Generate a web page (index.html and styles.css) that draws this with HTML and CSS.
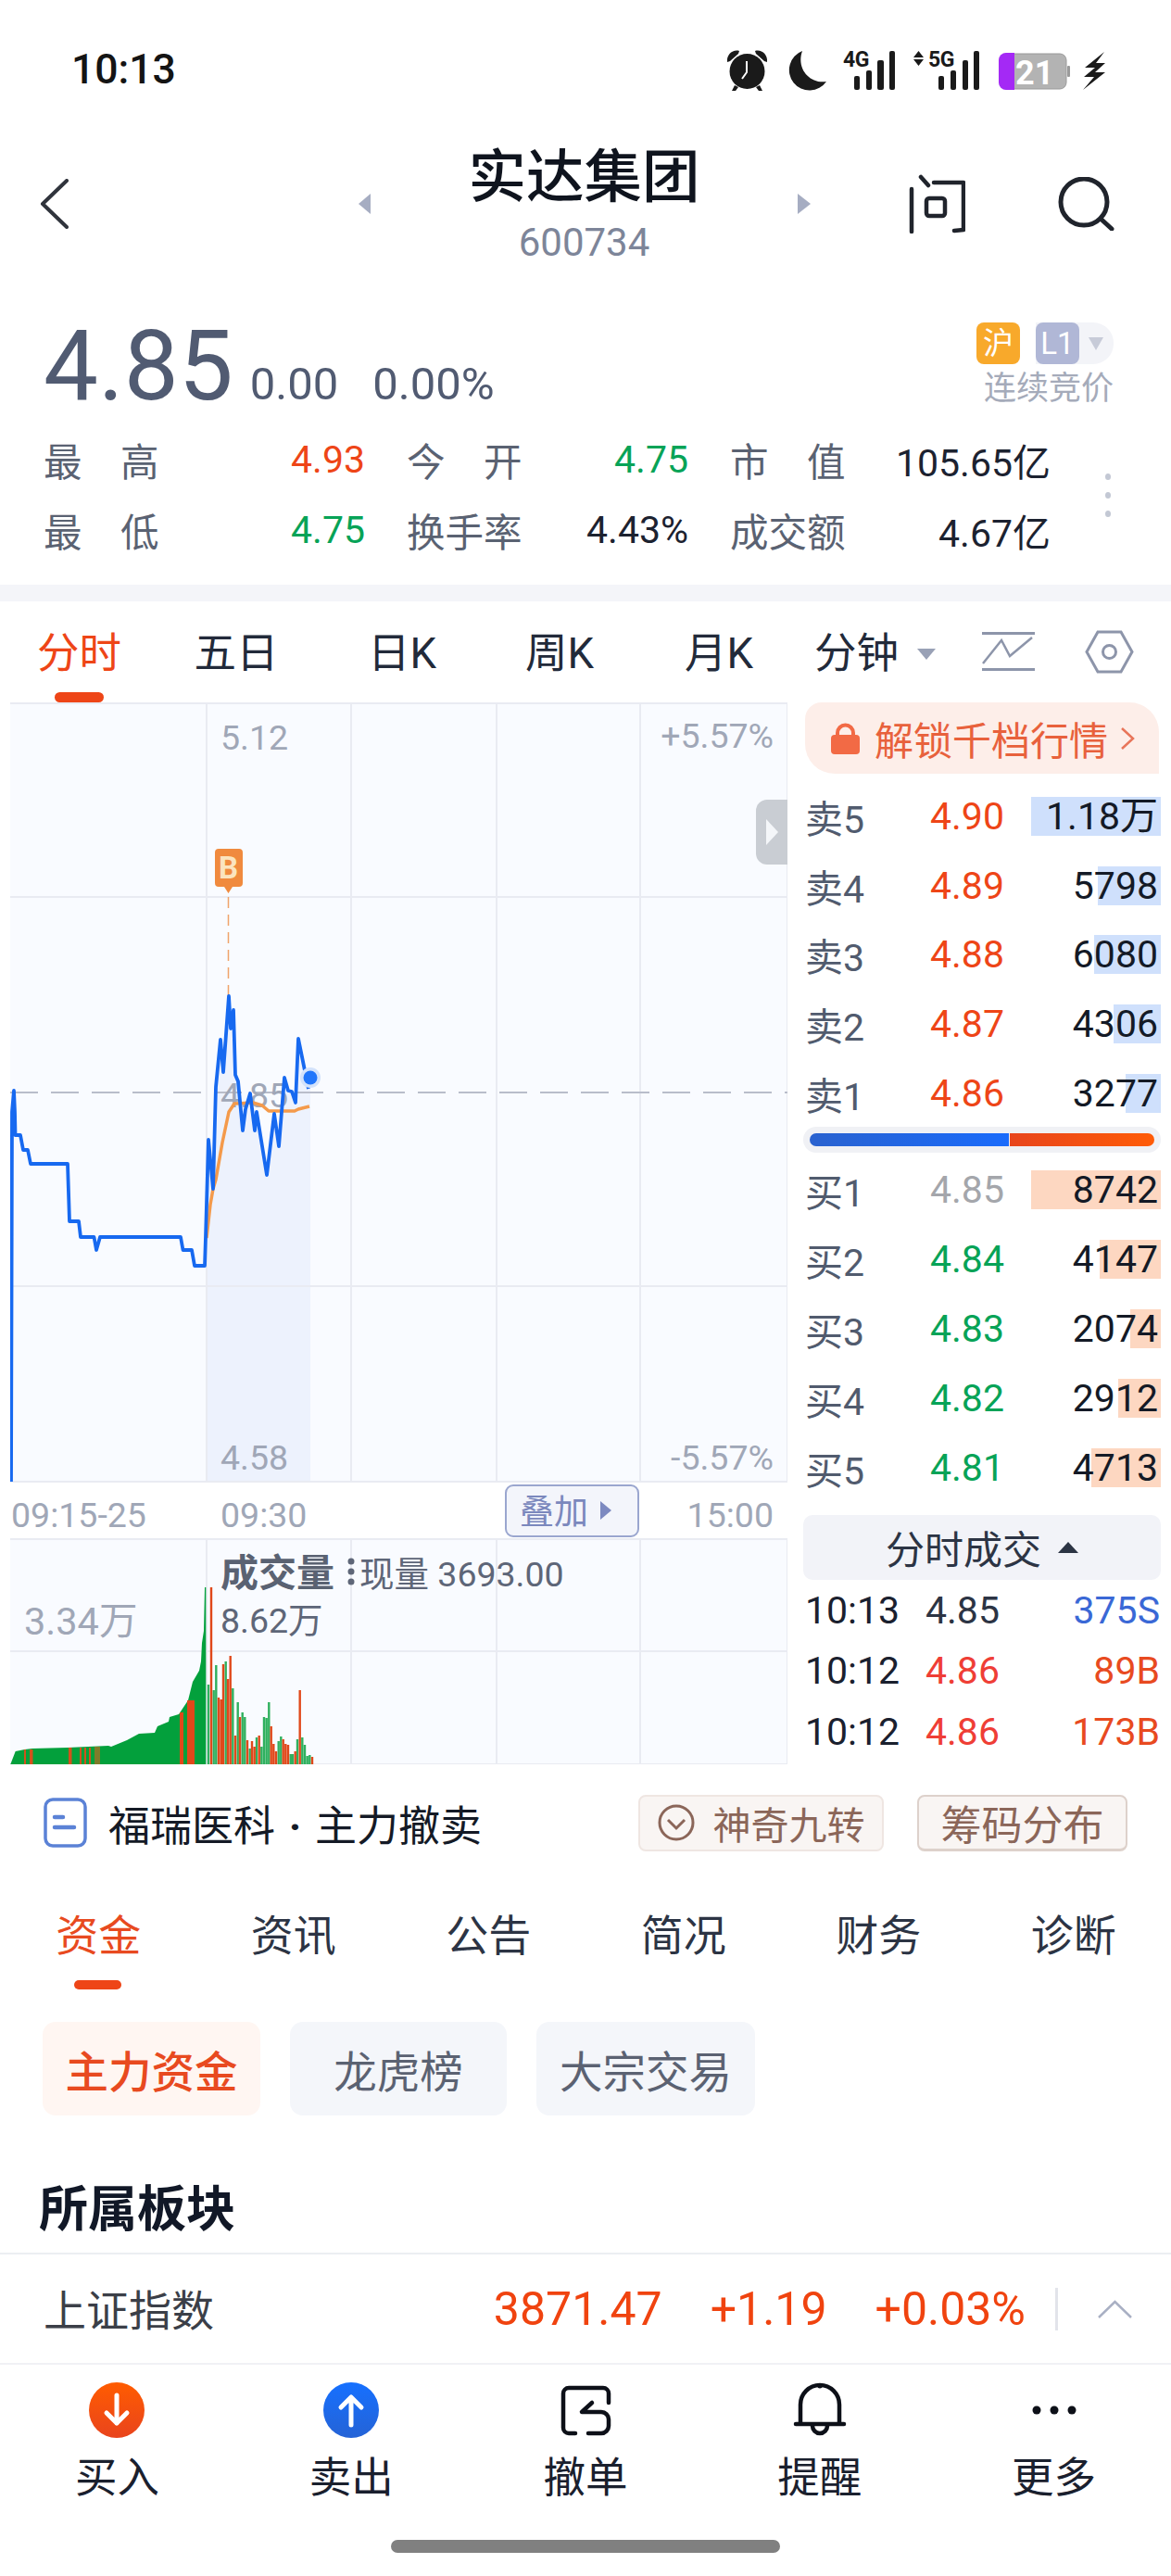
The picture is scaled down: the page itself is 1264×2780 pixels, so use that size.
FILE: index.html
```html
<!DOCTYPE html>
<html lang="zh-CN">
<head>
<meta charset="utf-8">
<title>实达集团</title>
<link rel="stylesheet" href="styles.css">
</head>
<body>
<div class="page">
  <header class="status">
    <span class="clock">10:13</span>
    <svg class="status-icons" width="420" height="50" viewBox="780 50 420 50">
      <g fill="#1a1a1a">
        <circle cx="806.500" cy="77" r="19"/>
        <path d="M785 67c-1-8 6-14 13-12l-1 3-9 8zM828 67c1-8-6-14-13-12l1 3 9 8z"/>
        <path d="M793 92l-3 6h4l3-4zM820 92l3 6h-4l-3-4z"/>
        <path d="M866 55a22 22 0 1 0 26 33c-17 3-33-13-26-33z"/>
        <rect x="922" y="82" width="6" height="15" rx="2"/><rect x="935" y="76" width="6" height="21" rx="2"/><rect x="947" y="65" width="7" height="32" rx="2"/><rect x="960" y="55" width="6" height="42" rx="2"/>
        <rect x="1013" y="82" width="6" height="15" rx="2"/><rect x="1026" y="76" width="6" height="21" rx="2"/><rect x="1039" y="65" width="6" height="32" rx="2"/><rect x="1051" y="55" width="6" height="42" rx="2"/>
        <path d="M991.500 55l5.500 7h-11zM991.500 71l5.500-7h-11z"/>
        <path d="M1192 56L1171 73H1182L1170 83H1181L1169 97L1193 78H1182L1193 68H1183z"/>
      </g>
      <text class="net" x="910" y="72">4G</text>
      <text class="net" x="1002" y="72">5G</text>
      <path d="M1086 58h58a7 7 0 0 1 7 7v24a7 7 0 0 1-7 7h-58a7 7 0 0 1-7-7v-24a7 7 0 0 1 7-7z" fill="#b3b3b3" stroke="#9a9a9a"/>
      <path d="M1086 57h9v40h-9a8 8 0 0 1-8-8v-24a8 8 0 0 1 8-8z" fill="#a429f5"/>
      <rect x="1152" y="71" width="3" height="12" rx="1" fill="#9a9a9a"/>
      <text class="batt" x="1096" y="91">21</text>
      <path d="M806 66v12l-5 7" fill="none" stroke="#fff" stroke-width="2"/>
    </svg>
  </header>

  <nav class="nav">
    <svg class="nav-back" width="31" height="54" viewBox="0 0 31 54"><path d="M29 2L3 27l26 25" fill="none" stroke="#30343c" stroke-width="4" stroke-linecap="round" stroke-linejoin="round"/></svg>
    <svg class="nav-arrow" width="13" height="22" viewBox="0 0 13 22"><path d="M13 0v22L0 11z" fill="#a6adc2"/></svg>
    <div class="nav-title">
      <div class="title">实达集团</div>
      <div class="code">600734</div>
    </div>
    <svg class="nav-arrow" width="14" height="22" viewBox="0 0 14 22"><path d="M0 0v22l14-11z" fill="#a6adc2"/></svg>
    <svg class="nav-ask" width="62" height="64" viewBox="0 0 62 64"><g fill="none" stroke="#20242c" stroke-width="4.500" stroke-linecap="round" stroke-linejoin="round"><path d="M4 16v46M14 3l8 9M28 9h32v51l-10 1"/><rect x="20" y="26" width="20" height="19" rx="3"/></g></svg>
    <svg class="nav-search" width="62" height="58" viewBox="0 0 62 58"><g fill="none" stroke="#20242c" stroke-width="5" stroke-linecap="round"><circle cx="29" cy="27" r="25"/><path d="M47 45l12 11"/></g></svg>
  </nav>

  <section class="quote">
    <div class="quote-top">
      <span class="price">4.85</span>
      <span class="chg">0.00</span>
      <span class="chg chg-pct">0.00%</span>
      <div class="market">
        <div class="market-badges">
          <span class="badge badge-sh">沪</span>
          <span class="badge-group"><span class="badge badge-l1">L1</span><svg width="16" height="14" viewBox="0 0 16 14"><path d="M0 0h16L8 14z" fill="#c7cbd8"/></svg></span>
        </div>
        <div class="market-state">连续竞价</div>
      </div>
    </div>
    <div class="stats">
      <div class="stat-grid">
        <div class="stat"><span>最　高</span><b class="up">4.93</b></div>
        <div class="stat"><span>今　开</span><b class="down">4.75</b></div>
        <div class="stat"><span>市　值</span><b>105.65亿</b></div>
        <div class="stat"><span>最　低</span><b class="down">4.75</b></div>
        <div class="stat"><span>换手率</span><b>4.43%</b></div>
        <div class="stat"><span>成交额</span><b>4.67亿</b></div>
      </div>
      <div class="stat-dots"><i></i><i></i><i></i></div>
    </div>
  </section>
  <div class="band"></div>

  <div class="period-tabs">
    <span class="period period-on">分时</span>
    <span class="period">五日</span>
    <span class="period">日K</span>
    <span class="period">周K</span>
    <span class="period">月K</span>
    <span class="period-min">分钟<svg width="20" height="12" viewBox="0 0 20 12"><path d="M0 0h20L10 12z" fill="#99a1b6"/></svg></span>
    <svg class="period-trend" width="57" height="42" viewBox="0 0 57 42"><g fill="none" stroke="#8d95aa"><path d="M0 1.500h57M0 40.500h57" stroke-width="3"/><path d="M1 34L21 9l9 17L54 6" stroke-width="2.500"/></g></svg>
    <svg class="period-set" width="53" height="47" viewBox="0 0 53 47"><g fill="none" stroke="#8d95aa" stroke-width="3"><path d="M14 2h25l12 21.500L39 45H14L2 23.500z"/><circle cx="26.500" cy="23.500" r="7"/></g></svg>
  </div>

  <main class="market-main">
    <svg class="chart" width="839" height="1146" viewBox="11 758 839 1146">
      <rect x="11" y="758" width="839" height="841" fill="#f9fbff"/>
      <rect x="11" y="1660" width="839" height="244" fill="#f9fbff"/>
      <path d="M223 1335L223 1300 225 1230 230 1283 233 1173 238 1122 241 1157 247 1075 249 1110 252 1090 254 1160 257 1167 262 1220 265 1197 270 1180 275 1220 277 1200 288 1268 296 1202 301 1237 307 1163 311 1177 315 1178 319 1190 322 1121 333 1175 335 1163 335 1599 223 1599z" fill="#edf2fd"/>
      <g stroke="#e9ebf2" stroke-width="2" fill="none">
        <path d="M11 759H850M11 968H850M11 1388H850M11 1599H850M223 758V1599M379 758V1599M536 758V1599M691 758V1599M850 758V1599"/>
        <path d="M11 1661H850M11 1782H850M11 1904H850M223 1660V1904M379 1660V1904M536 1660V1904M691 1660V1904M850 1660V1904"/>
      </g>
      <path d="M11 1179H850" stroke="#b9bdca" stroke-width="2" stroke-dasharray="30 14"/>
      <text class="ax" x="238" y="809">5.12</text>
      <text class="ax ax-end" x="835" y="807">+5.57%</text>
      <text class="ax" x="238" y="1195">4.85</text>
      <text class="ax" x="238" y="1586">4.58</text>
      <text class="ax ax-end" x="835" y="1586">-5.57%</text>
      <text class="ax" x="12" y="1648">09:15-25</text>
      <text class="ax" x="238" y="1648">09:30</text>
      <text class="ax ax-end" x="835" y="1648">15:00</text>
      <rect x="546" y="1603" width="143" height="55" rx="8" fill="#f3f5fb" stroke="#9aa6cf" stroke-width="2"/>
      <text class="overlay-btn" x="561" y="1645">叠加</text>
      <path d="M648 1620v20l12-10z" fill="#7c89c0"/>
      <path d="M850 863h-22a12 12 0 0 0-12 12v46a12 12 0 0 0 12 12h22z" fill="#c9cdd3"/>
      <path d="M827 884v28l13-14z" fill="#f4f6f9"/>
      <path d="M246.500 968v107" stroke="#f0a36a" stroke-width="1.500" stroke-dasharray="12 7"/>
      <path d="M236 916h22a4 4 0 0 1 4 4v33a4 4 0 0 1-4 4h-7l-4.500 7-4.500-7h-6a4 4 0 0 1-4-4v-33a4 4 0 0 1 4-4z" fill="#f08a3e"/>
      <text class="bs-mark" x="246.500" y="948">B</text>
      <polyline fill="none" stroke="#f49a4b" stroke-width="3.500" stroke-linejoin="round" points="223,1336 227,1300 230,1283 233,1273 240,1233 247,1200 253,1191 273,1190 283,1193 290,1199 318,1199 322,1197 334,1194"/>
      <polyline fill="none" stroke="#1769f0" stroke-width="3.800" stroke-linejoin="round" points="12,1599 13,1200 15,1177 16,1200 16.500,1225 22,1225 25,1241 30,1241 33,1256 73,1256 75,1318 85,1318 87,1335 101.500,1335 104,1349 108,1335 195,1335 197.500,1349 207,1349 210,1366 221,1366 222,1335 223,1300 225,1230 230,1283 233,1173 238,1122 241,1157 247,1075 249,1110 252,1090 254,1160 257,1167 262,1220 265,1197 270,1180 275,1220 277,1200 288,1268 296,1202 301,1237 307,1163 311,1177 315,1178 319,1190 322,1121 333,1175"/>
      <circle cx="335" cy="1163" r="11" fill="#d3e2fb"/>
      <circle cx="335" cy="1163" r="7.500" fill="#2176fb"/>
      <text class="vol-title" x="238" y="1712">成交量</text>
      <g fill="#5e6678"><circle cx="379" cy="1685" r="3.500"/><circle cx="379" cy="1696" r="3.500"/><circle cx="379" cy="1707" r="3.500"/></g>
      <text class="vol-now" x="388" y="1712">现量 3693.00</text>
      <text class="vol-now" x="238" y="1762">8.62万</text>
      <text class="ax ax-vol" x="26" y="1764">3.34万</text>
      <path d="M11.300 1904L16.700 1890 26.700 1888 35 1887 73 1886 117 1884 120 1885 137 1878 150 1871 167 1870 170 1863 182 1858 183 1853 193 1850 203 1835 208 1815 215 1803 217 1793 218 1773 220 1760 221 1713 222.300 1713 222.300 1904z" fill="#03a03c"/>
      <g fill="#d1521c"><rect x="26" y="1888" width="2" height="16"/><rect x="32" y="1888" width="3.500" height="16"/><rect x="74" y="1886" width="3.500" height="18"/><rect x="86" y="1886" width="2" height="18"/><rect x="91" y="1886" width="2" height="18"/><rect x="96" y="1886" width="2" height="18"/></g>
      <rect x="102" y="1885" width="6" height="19" fill="#7f7b2a"/>
      <g fill="#e0481a"><rect x="194" y="1848" width="4" height="56"/><rect x="202" y="1835" width="8" height="69"/></g>
      <path class="bar-g" d="M225 1904V1818M230.700 1904V1824M233.300 1904V1797M243.700 1904V1793M251.300 1904V1822M256.700 1904V1837M261.700 1904V1848M264.300 1904V1853M269.700 1904V1887M277 1904V1875M282.300 1904V1885M285 1904V1853M287.700 1904V1854M290.300 1904V1837M300.700 1904V1879M303.300 1904V1874M313.700 1904V1893M316 1904V1893M321 1904V1877M326.300 1904V1875M329 1904V1883M331.700 1904V1895M334.300 1904V1894"/>
      <path class="bar-r" d="M228 1904V1713M236 1904V1832M238.700 1904V1834M241 1904V1796M246 1904V1812M248.700 1904V1787M254 1904V1873M259 1904V1853M267 1904V1878M272 1904V1879M274.700 1904V1885M279.700 1904V1873M292.700 1904V1863M295.300 1904V1882M298 1904V1890M305.700 1904V1877M308.300 1904V1882M311 1904V1883M318.700 1904V1890M323.700 1904V1824M337 1904V1896"/>
    </svg>

    <aside class="book">
      <div class="unlock">
        <svg width="31" height="34" viewBox="0 0 31 34"><path d="M7 15V11a8.500 8.500 0 0 1 17 0v4" fill="none" stroke="#f26a45" stroke-width="4"/><rect x="0" y="13" width="31" height="21" rx="4" fill="#f26a45"/></svg>
        <span class="unlock-text">解锁千档行情</span>
        <svg width="16" height="26" viewBox="0 0 16 26"><path d="M2 2l12 11L2 24" fill="none" stroke="#e8755a" stroke-width="2.500"/></svg>
      </div>
      <div class="book-sell">
        <div class="book-row"><span class="lv">卖5</span><span class="px up">4.90</span><span class="qty"><i class="qbar qbar-sell" style="width:140px"></i><em>1.18万</em></span></div>
        <div class="book-row"><span class="lv">卖4</span><span class="px up">4.89</span><span class="qty"><i class="qbar qbar-sell" style="width:68px"></i><em>5798</em></span></div>
        <div class="book-row"><span class="lv">卖3</span><span class="px up">4.88</span><span class="qty"><i class="qbar qbar-sell" style="width:72px"></i><em>6080</em></span></div>
        <div class="book-row"><span class="lv">卖2</span><span class="px up">4.87</span><span class="qty"><i class="qbar qbar-sell" style="width:51px"></i><em>4306</em></span></div>
        <div class="book-row"><span class="lv">卖1</span><span class="px up">4.86</span><span class="qty"><i class="qbar qbar-sell" style="width:38px"></i><em>3277</em></span></div>
      </div>
      <div class="ratio"><i class="ratio-sell"></i><i class="ratio-buy"></i></div>
      <div class="book-buy">
        <div class="book-row"><span class="lv">买1</span><span class="px flat">4.85</span><span class="qty"><i class="qbar qbar-buy" style="width:140px"></i><em>8742</em></span></div>
        <div class="book-row"><span class="lv">买2</span><span class="px down">4.84</span><span class="qty"><i class="qbar qbar-buy" style="width:66px"></i><em>4147</em></span></div>
        <div class="book-row"><span class="lv">买3</span><span class="px down">4.83</span><span class="qty"><i class="qbar qbar-buy" style="width:33px"></i><em>2074</em></span></div>
        <div class="book-row"><span class="lv">买4</span><span class="px down">4.82</span><span class="qty"><i class="qbar qbar-buy" style="width:46px"></i><em>2912</em></span></div>
        <div class="book-row"><span class="lv">买5</span><span class="px down">4.81</span><span class="qty"><i class="qbar qbar-buy" style="width:75px"></i><em>4713</em></span></div>
      </div>
      <div class="trades-head">分时成交<svg width="22" height="12" viewBox="0 0 22 12"><path d="M11 0l11 12H0z" fill="#2c3444"/></svg></div>
      <div class="trade"><span class="t-time">10:13</span><span class="t-px">4.85</span><span class="t-vol t-sell">375S</span></div>
      <div class="trade"><span class="t-time">10:12</span><span class="t-px t-red">4.86</span><span class="t-vol t-buy">89B</span></div>
      <div class="trade"><span class="t-time">10:12</span><span class="t-px t-red">4.86</span><span class="t-vol t-buy">173B</span></div>
    </aside>
  </main>

  <div class="info">
    <svg class="info-icon" width="47" height="54" viewBox="0 0 47 54"><g fill="none" stroke="#5b82d6" stroke-width="3.500"><rect x="2" y="2" width="43" height="50" rx="8"/></g><path d="M12 21h9M12 32h21" stroke="#5b82d6" stroke-width="4.500" stroke-linecap="round"/></svg>
    <span class="info-text">福瑞医科<span class="info-dot">·</span>主力撤卖</span>
    <span class="tool tool-a"><svg width="40" height="42" viewBox="0 0 40 42"><circle cx="20" cy="21" r="18" fill="none" stroke="#8b6659" stroke-width="3"/><path d="M11 18l9 9 9-9" fill="none" stroke="#8b6659" stroke-width="3"/></svg>神奇九转</span>
    <span class="tool tool-b">筹码分布</span>
  </div>

  <div class="detail-tabs">
    <span class="dtab dtab-on">资金</span>
    <span class="dtab">资讯</span>
    <span class="dtab">公告</span>
    <span class="dtab">简况</span>
    <span class="dtab">财务</span>
    <span class="dtab">诊断</span>
  </div>

  <div class="chips">
    <span class="chip chip-on">主力资金</span>
    <span class="chip">龙虎榜</span>
    <span class="chip chip-wide">大宗交易</span>
  </div>

  <h2 class="sector-title">所属板块</h2>
  <div class="index-row">
    <span class="index-name">上证指数</span>
    <span class="index-val index-first">3871.47</span>
    <span class="index-val">+1.19</span>
    <span class="index-val">+0.03%</span>
    <i class="index-sep"></i>
    <svg width="37" height="20" viewBox="0 0 37 20"><path d="M1 19L18.500 2 36 19" fill="none" stroke="#a9b0c4" stroke-width="2.500"/></svg>
  </div>

  <footer class="dock">
    <div class="dock-item">
      <svg width="60" height="60" viewBox="0 0 60 60"><defs><linearGradient id="gb" x1="0" y1="0" x2="0" y2="1"><stop offset="0" stop-color="#ff5c00"/><stop offset="1" stop-color="#e9441d"/></linearGradient></defs><circle cx="30" cy="30" r="30" fill="url(#gb)"/><path d="M30 14v30M19 33l11 11 11-11" fill="none" stroke="#fff" stroke-width="5" stroke-linecap="round" stroke-linejoin="round"/></svg>
      <span>买入</span>
    </div>
    <div class="dock-item">
      <svg width="60" height="60" viewBox="0 0 60 60"><defs><linearGradient id="gs" x1="0" y1="0" x2="0" y2="1"><stop offset="0" stop-color="#1670ff"/><stop offset="1" stop-color="#2563d6"/></linearGradient></defs><circle cx="30" cy="30" r="30" fill="url(#gs)"/><path d="M30 46V16M19 27l11-11 11 11" fill="none" stroke="#fff" stroke-width="5" stroke-linecap="round" stroke-linejoin="round"/></svg>
      <span>卖出</span>
    </div>
    <div class="dock-item">
      <svg width="60" height="60" viewBox="0 0 60 60"><g fill="none" stroke="#0d1018" stroke-width="4.500" stroke-linecap="round" stroke-linejoin="round"><path d="M55 22V12a6 6 0 0 0-6-6H12a6 6 0 0 0-6 6V49a6 6 0 0 0 6 6h7"/><path d="M37 22L26 32H47a8 8 0 0 1 8 8v7a8 8 0 0 1-8 8H33"/></g></svg>
      <span>撤单</span>
    </div>
    <div class="dock-item">
      <svg width="60" height="60" viewBox="0 0 60 60"><g fill="none" stroke="#0d1018" stroke-width="4.500" stroke-linecap="round" stroke-linejoin="round"><path d="M9 44V24a21 21 0 0 1 42 0v20"/><path d="M4 45h52"/><path d="M22 47a8 8 0 0 0 16 0"/></g><circle cx="30" cy="4" r="2.500" fill="#0d1018"/></svg>
      <span>提醒</span>
    </div>
    <div class="dock-item">
      <svg width="60" height="60" viewBox="0 0 60 60"><g fill="#0d1018"><circle cx="11" cy="30" r="4.500"/><circle cx="30" cy="30" r="4.500"/><circle cx="49" cy="30" r="4.500"/></g></svg>
      <span>更多</span>
    </div>
  </footer>
  <div class="home-wrap"><div class="home"></div></div>
</div>
</body>
</html>
```
FILE: styles.css
```css
* { box-sizing: border-box; }
html, body { margin: 0; padding: 0; background: #fff; }
body { font-family: Roboto, "Noto Sans CJK SC", sans-serif; color: #1a202e; }
i, em { font-style: normal; }
.page { width: 1264px; height: 2780px; overflow: hidden; background: #fff; }

.status { height: 150px; display: flex; align-items: center; padding: 0 64px 0 77px; justify-content: space-between; }
.clock { font-size: 44.500px; font-weight: 500; color: #141414; }
.net { font-family: Roboto, sans-serif; font-size: 23px; font-weight: 700; fill: #1a1a1a; letter-spacing: -0.5px; }
.batt { font-family: Roboto, sans-serif; font-size: 36px; font-weight: 700; fill: #fff; }

.nav { height: 140px; display: flex; align-items: center; padding-left: 43px; }
.nav-back { flex: none; margin-right: 313px; }
.nav-arrow { flex: none; }
.nav-title { width: 461px; text-align: center; flex: none; }
.title { font-size: 62.500px; line-height: 84px; font-weight: 500; color: #0f141e; }
.code { font-size: 42px; line-height: 56px; color: #7d8599; }
.nav-ask { flex: none; margin-left: 105px; }
.nav-search { flex: none; margin-left: 99px; }

.quote { height: 341px; }
.quote-top { height: 168px; display: flex; align-items: baseline; padding: 54px 62px 0 47px; }
.price { font-size: 105px; line-height: 104px; color: #515b72; }
.chg { font-size: 49px; color: #515b72; margin-left: 18px; }
.chg-pct { margin-left: 37px; }
.market { align-self: flex-start; margin-left: auto; margin-top: 4px; width: 148px; }
.market-badges { display: flex; gap: 17px; height: 45px; }
.badge { display: flex; align-items: center; justify-content: center; width: 47px; height: 45px; border-radius: 8px; color: #fff; font-size: 33px; line-height: 45px; }
.badge-sh { background: #f8a92b; }
.badge-group { display: flex; align-items: center; gap: 10px; background: #f3f4f8; border-radius: 0 22px 22px 0; width: 84px; flex: none; }
.badge-l1 { background: #b0b7d6; flex: none; }
.market-state { margin-top: 8px; font-size: 35px; line-height: 38px; color: #a5abba; text-align: right; white-space: nowrap; }

.stats { display: flex; align-items: center; padding-left: 47px; }
.stat-grid { display: grid; grid-template-columns: 347px 304px 346px; column-gap: 45px; grid-auto-rows: 76px; }
.stat { display: flex; justify-content: space-between; align-items: center; font-size: 41.500px; color: #5a6272; }
.stat b { font-weight: 400; font-size: 41px; color: #1c2230; }
.stat b.up { color: #ee4517; }
.stat b.down { color: #07a357; }
.stat-dots { margin-left: 59px; display: flex; flex-direction: column; gap: 13px; }
.stat-dots i { display: block; width: 6px; height: 7px; border-radius: 50%; background: #c3c8d4; }

.band { height: 18px; background: #f4f5f9; }

.period-tabs { height: 109px; display: flex; align-items: flex-start; padding-top: 27px; font-size: 45.500px; line-height: 60px; color: #222a3a; }
.period { flex: none; text-align: center; position: relative; width: 150px; }
.period:nth-child(1) { width: 171px; }
.period:nth-child(2) { width: 168px; }
.period:nth-child(3) { width: 190px; }
.period:nth-child(5) { width: 194px; }
.period-on { color: #ee4517; }
.period-on::after { content: ""; position: absolute; left: 59px; top: 71px; width: 53px; height: 11px; border-radius: 6px; background: #ee4517; }
.period-min { margin-left: 6px; display: flex; align-items: center; gap: 20px; flex: none; width: 131px; white-space: nowrap; }
.period-trend { margin: 6px 0 0 50px; flex: none; }
.period-set { margin: 4px 0 0 54px; flex: none; }

.market-main { height: 1146px; display: flex; padding-left: 11px; }
.chart { flex: none; display: block; }
.ax { font-size: 37.500px; fill: #a0a7b7; }
.ax-end { text-anchor: end; }
.ax-vol { font-size: 41.500px; }
.overlay-btn { font-size: 37px; fill: #7b88bd; }
.bs-mark { font-size: 33px; font-weight: 700; fill: #fbe4bf; text-anchor: middle; }
.vol-title { font-size: 41px; font-weight: 700; fill: #5a6272; }
.vol-now { font-size: 37.500px; fill: #5e6678; }
.bar-g { stroke: #2fb05e; stroke-width: 2.4; fill: none; }
.bar-r { stroke: #e0481a; stroke-width: 2.4; fill: none; }

.book { flex: none; width: 386px; margin-left: 17px; }
.unlock { height: 77px; margin: 0 2px; display: flex; align-items: center; padding-left: 28px; background: #fdeee9; border-radius: 18px 32px 0 32px; }
.unlock-text { font-size: 42px; color: #e8613c; margin: 0 13px 0 16px; white-space: nowrap; }
.book-sell { margin-top: 9px; }
.book-row { height: 74.600px; display: grid; grid-template-columns: 135px 1fr auto; align-items: center; font-size: 41px; padding-left: 2px; }
.lv { font-size: 41px; color: #515b6e; white-space: nowrap; }
.up { color: #ee4517; }
.down { color: #07a357; }
.flat { color: #a4a6ab; }
.qty { position: relative; height: 42px; display: flex; align-items: center; justify-content: flex-end; padding-right: 3px; color: #141a26; line-height: 42px; }
.qty em { position: relative; }
.qbar { position: absolute; right: 0; top: 0; bottom: 0; }
.qbar-sell { background: #cfe0fc; }
.qbar-buy { background: #fdd7c1; }
.ratio { margin-top: -1px; height: 28px; border-radius: 14px; background: #f0f1f5; display: flex; gap: 1px; padding: 7px; }
.ratio-sell { display: block; width: 215px; height: 14px; border-radius: 7px 0 0 7px; background: linear-gradient(90deg, #2a62cf, #1a6bfb); }
.ratio-buy { display: block; flex: 1; height: 14px; border-radius: 0 7px 7px 0; background: linear-gradient(90deg, #e8451c, #ff5c07); }
.book-buy { margin-top: 3px; }
.book-buy .book-row { height: 75px; }
.trades-head { margin-top: 13px; height: 70px; background: #f2f3f8; border-radius: 10px; display: flex; align-items: center; justify-content: center; gap: 18px; font-size: 42px; color: #2c3444; }
.trade { height: 65.500px; display: grid; grid-template-columns: 130px 1fr auto; align-items: center; font-size: 41px; padding: 0 1px 0 2px; }
.t-time { color: #1a202e; }
.t-px { color: #2c3444; }
.t-red { color: #ef3e36; }
.t-sell { color: #3a68d6; }
.t-buy { color: #e84a20; }

.info { height: 126px; display: flex; align-items: center; padding: 0 47px; }
.info-icon { flex: none; margin-right: 23px; }
.info-text { font-size: 45px; color: #141a26; white-space: nowrap; margin-right: auto; }
.info-dot { display: inline-block; width: 43px; text-align: center; font-weight: 700; }
.tool { height: 61px; display: flex; align-items: center; justify-content: center; border-radius: 8px; background: #f9f5f3; border: 2px solid #efe6e2; color: #8b6659; font-size: 41px; white-space: nowrap; }
.tool-a { width: 265px; gap: 20px; }
.tool-b { width: 227px; margin-left: 36px; font-size: 44px; border-bottom-width: 3px; border-color: #ddd1cb; }

.detail-tabs { height: 120px; margin-left: 1px; padding-top: 29px; display: grid; grid-template-columns: repeat(6, 210.500px); font-size: 46px; line-height: 60px; color: #2c3444; }
.dtab { text-align: center; position: relative; }
.dtab-on { color: #e84a20; }
.dtab-on::after { content: ""; position: absolute; left: 79px; top: 78px; width: 51px; height: 10px; border-radius: 5px; background: #ee4517; }

.chips { margin-top: 32px; height: 101px; display: flex; gap: 32px; padding-left: 46px; }
.chip { width: 234px; display: flex; align-items: center; justify-content: center; border-radius: 14px; background: #f4f6fa; font-size: 46.500px; color: #5b6272; }
.chip-wide { width: 236px; }
.chip-on { width: 235px; background: #fff6f2; color: #e84a20; font-weight: 500; }

.sector-title { margin: 0; padding: 72px 0 0 42px; font-size: 53px; line-height: 60px; font-weight: 700; color: #111827; border-bottom: 2px solid #eceef2; box-sizing: content-box; height: 76px; }
.index-row { height: 119px; display: flex; align-items: center; padding: 0 42px 0 47px; border-bottom: 2px solid #f0f1f5; }
.index-name { font-size: 46px; color: #3b3f48; margin-top: -3px; }
.index-val { font-size: 50px; color: #f0430f; margin-left: 52px; }
.index-first { margin-left: auto; }
.index-sep { width: 3px; height: 46px; margin: 0 43px 0 32px; background: #e2e4ea; }

.dock { display: grid; grid-template-columns: repeat(5, 1fr); padding-top: 19px; }
.dock-item { display: flex; flex-direction: column; align-items: center; gap: 14px; font-size: 45.500px; line-height: 60px; color: #1a202e; }
.dock-item svg { display: block; }
.home-wrap { margin-top: 36px; display: flex; justify-content: center; }
.home { width: 420px; height: 14px; border-radius: 7px; background: #808080; }
```
